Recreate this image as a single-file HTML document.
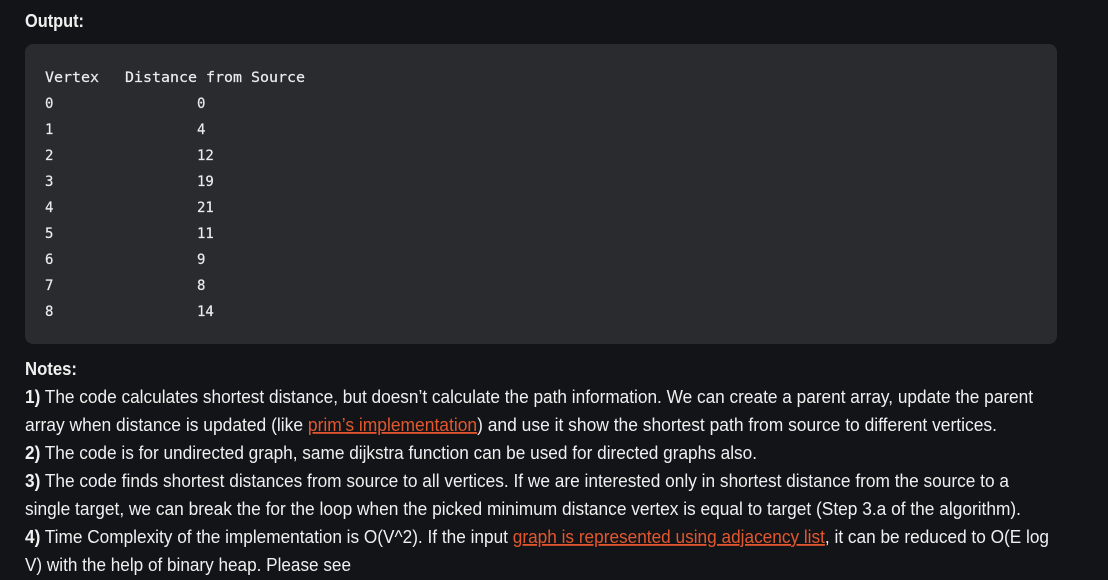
<!DOCTYPE html>
<html><head><meta charset="utf-8"><style>
html,body{margin:0;padding:0;background:#131417;width:1108px;height:580px;overflow:hidden}
svg{display:block}
.t{font-family:"Liberation Sans",sans-serif;font-size:18px;fill:#f0f0f0}
.b{font-weight:bold}
.l{fill:#e2572e;text-decoration:underline}
.m{font-family:"DejaVu Sans Mono","Liberation Mono",monospace;font-size:14px;fill:#ececec;stroke:#ececec;stroke-width:0.2}
</style></head><body>
<svg width="1108" height="580" xmlns="http://www.w3.org/2000/svg">
<text class="t b" x="25" y="27" textLength="59" lengthAdjust="spacingAndGlyphs">Output:</text>
<rect x="25" y="44" width="1032" height="300" rx="8" fill="#2a2b2e"/>
<text class="m" x="45" y="82" textLength="54" lengthAdjust="spacingAndGlyphs">Vertex</text>
<text class="m" x="125" y="82" textLength="180" lengthAdjust="spacingAndGlyphs">Distance from Source</text>
<g class="m">
<text x="45" y="108">0</text><text x="197" y="108">0</text>
<text x="45" y="134">1</text><text x="197" y="134">4</text>
<text x="45" y="160">2</text><text x="197" y="160">12</text>
<text x="45" y="186">3</text><text x="197" y="186">19</text>
<text x="45" y="212">4</text><text x="197" y="212">21</text>
<text x="45" y="238">5</text><text x="197" y="238">11</text>
<text x="45" y="264">6</text><text x="197" y="264">9</text>
<text x="45" y="290">7</text><text x="197" y="290">8</text>
<text x="45" y="316">8</text><text x="197" y="316">14</text>
</g>
<text class="t b" x="25" y="375" textLength="52" lengthAdjust="spacingAndGlyphs">Notes:</text>
<text class="t" x="25" y="403" textLength="1008" lengthAdjust="spacingAndGlyphs"><tspan class="b">1)</tspan> The code calculates shortest distance, but doesn’t calculate the path information. We can create a parent array, update the parent</text>
<text class="t" x="25" y="431" textLength="972" lengthAdjust="spacingAndGlyphs">array when distance is updated (like <tspan class="l">prim’s implementation</tspan>) and use it show the shortest path from source to different vertices.</text>
<text class="t" x="25" y="459" textLength="732" lengthAdjust="spacingAndGlyphs"><tspan class="b">2)</tspan> The code is for undirected graph, same dijkstra function can be used for directed graphs also.</text>
<text class="t" x="25" y="487" textLength="984" lengthAdjust="spacingAndGlyphs"><tspan class="b">3)</tspan> The code finds shortest distances from source to all vertices. If we are interested only in shortest distance from the source to a</text>
<text class="t" x="25" y="515" textLength="996" lengthAdjust="spacingAndGlyphs">single target, we can break the for the loop when the picked minimum distance vertex is equal to target (Step 3.a of the algorithm).</text>
<text class="t" x="25" y="543" textLength="1024" lengthAdjust="spacingAndGlyphs"><tspan class="b">4)</tspan> Time Complexity of the implementation is O(V^2). If the input <tspan class="l">graph is represented using adjacency list</tspan>, it can be reduced to O(E log</text>
<text class="t" x="25" y="571" textLength="326" lengthAdjust="spacingAndGlyphs">V) with the help of binary heap. Please see</text>
</svg>
</body></html>
